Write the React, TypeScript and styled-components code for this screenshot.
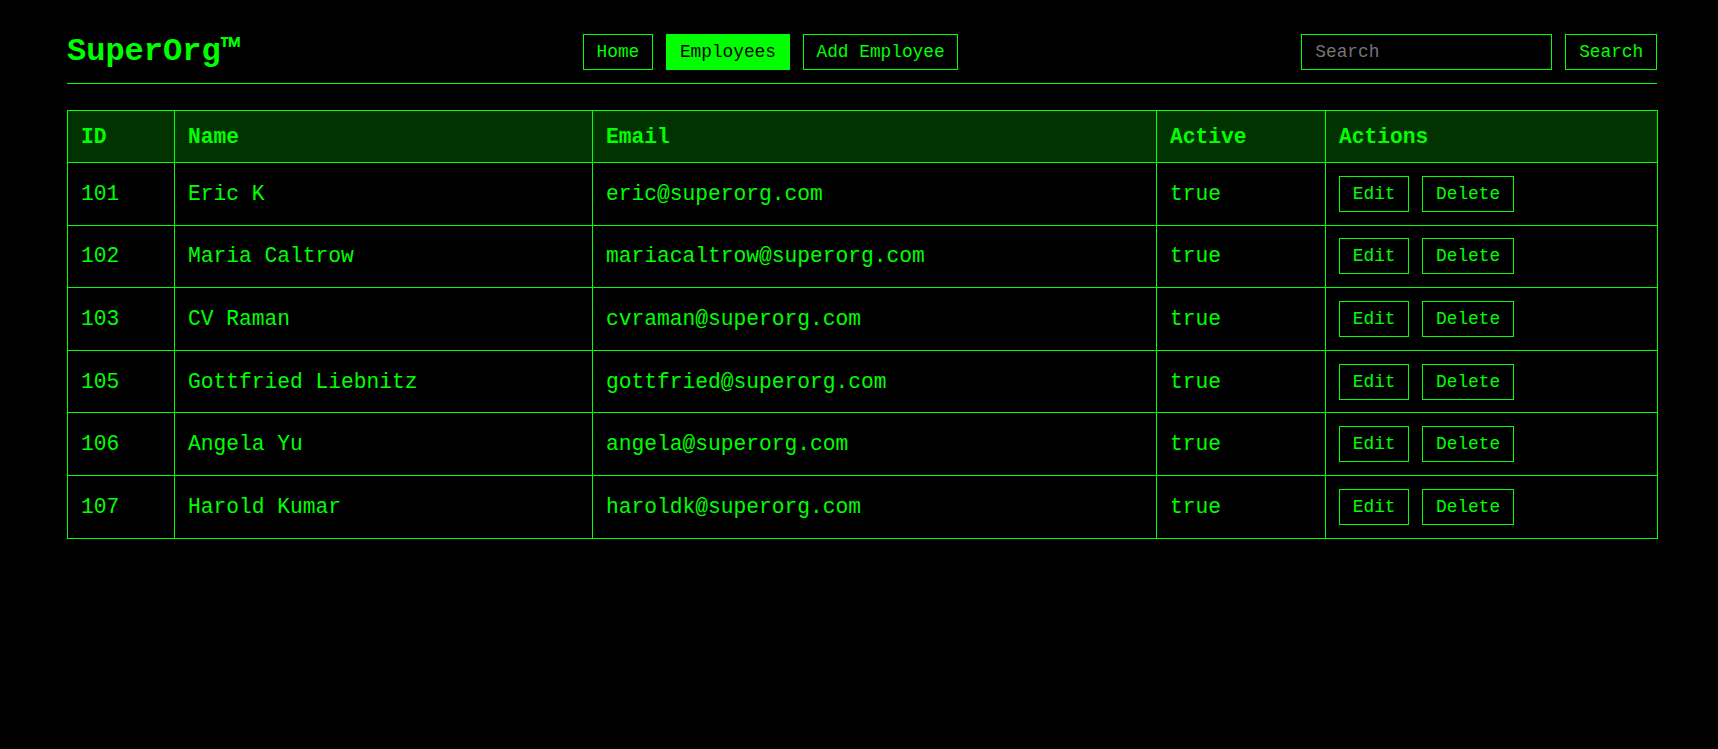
import * as React from 'react'
import styled, { createGlobalStyle } from 'styled-components'

type Employee = {
  id: number
  name: string
  email: string
  active: boolean
}

const employees: Employee[] = [
  { id: 101, name: 'Eric K', email: 'eric@superorg.com', active: true },
  { id: 102, name: 'Maria Caltrow', email: 'mariacaltrow@superorg.com', active: true },
  { id: 103, name: 'CV Raman', email: 'cvraman@superorg.com', active: true },
  { id: 105, name: 'Gottfried Liebnitz', email: 'gottfried@superorg.com', active: true },
  { id: 106, name: 'Angela Yu', email: 'angela@superorg.com', active: true },
  { id: 107, name: 'Harold Kumar', email: 'haroldk@superorg.com', active: true },
]

const columns = [
  { label: 'ID', width: 107 },
  { label: 'Name', width: 418 },
  { label: 'Email', width: 564 },
  { label: 'Active', width: 169 },
  { label: 'Actions', width: 332 },
]

const mono = `"Courier New", Courier, "Nimbus Mono PS", FreeMono, "Liberation Mono", monospace`

export default function App() {
  return (
    <>
      <GlobalStyle />
      <Page>
        <Header>
          <Logo>
            SuperOrg<sup>™</sup>
          </Logo>
          <Nav>
            <Button>Home</Button>
            <Button active>Employees</Button>
            <Button>Add Employee</Button>
          </Nav>
          <SearchForm onSubmit={(e) => e.preventDefault()}>
            <SearchInput placeholder="Search" />
            <Button type="submit">Search</Button>
          </SearchForm>
        </Header>

        <Table>
          <colgroup>
            {columns.map((c) => (
              <col key={c.label} style={{ width: c.width }} />
            ))}
          </colgroup>
          <thead>
            <tr>
              {columns.map((c) => (
                <Th key={c.label}>{c.label}</Th>
              ))}
            </tr>
          </thead>
          <tbody>
            {employees.map((emp) => (
              <tr key={emp.id}>
                <Td>{emp.id}</Td>
                <Td>{emp.name}</Td>
                <Td>{emp.email}</Td>
                <Td>{String(emp.active)}</Td>
                <Td>
                  <Actions>
                    <Button>Edit</Button>
                    <Button>Delete</Button>
                  </Actions>
                </Td>
              </tr>
            ))}
          </tbody>
        </Table>
      </Page>
    </>
  )
}

const GlobalStyle = createGlobalStyle`
  html, body {
    margin: 0;
    padding: 0;
    background: #000;
    min-height: 100%;
  }
  body {
    font-family: ${mono};
    color: #00ff00;
  }
`

const Page = styled.main`
  width: 1590px;
  padding: 34px 0 0 67px;
`

const Header = styled.header`
  display: flex;
  justify-content: space-between;
  align-items: center;
  padding-bottom: 13px;
  border-bottom: 1px solid #00ff00;
`

const Logo = styled.h1`
  margin: 0;
  font-size: 2rem;
  font-weight: bold;
  color: #00ff00;
  line-height: 36px;

  & > sup {
    font-size: 1em;
    line-height: 0;
    vertical-align: baseline;
  }
`

const Nav = styled.nav`
  display: flex;
  gap: 13px;
`

const Button = styled.button<{ active?: boolean }>`
  font-family: ${mono};
  font-size: 17.8px;
  line-height: 20px;
  padding: 7px 12.8px;
  border: 1px solid #00ff00;
  background: ${(p) => (p.active ? '#00ff00' : '#000')};
  color: ${(p) => (p.active ? '#000' : '#00ff00')};
  cursor: pointer;
`

const SearchForm = styled.form`
  display: flex;
  gap: 13px;
`

const SearchInput = styled.input`
  box-sizing: border-box;
  width: 251px;
  font-family: ${mono};
  font-size: 17.8px;
  line-height: 20px;
  padding: 7px 13px;
  background: #000;
  color: #00ff00;
  border: 1px solid #00ff00;
  outline: none;

  &::placeholder {
    color: #757575;
  }
`

const Table = styled.table`
  width: 100%;
  margin-top: 26px;
  border-collapse: collapse;
  table-layout: fixed;
  font-size: 21.25px;
  line-height: 24px;
`

const Th = styled.th`
  text-align: left;
  font-weight: bold;
  background: #003300;
  color: #00ff00;
  padding: 13.5px 13px;
  border: 1px solid #00ff00;
`

const Td = styled.td`
  padding: 12.8px 13px;
  color: #00ff00;
  border: 1px solid #00ff00;
  white-space: nowrap;
`

const Actions = styled.div`
  display: flex;
  gap: 13px;
`
